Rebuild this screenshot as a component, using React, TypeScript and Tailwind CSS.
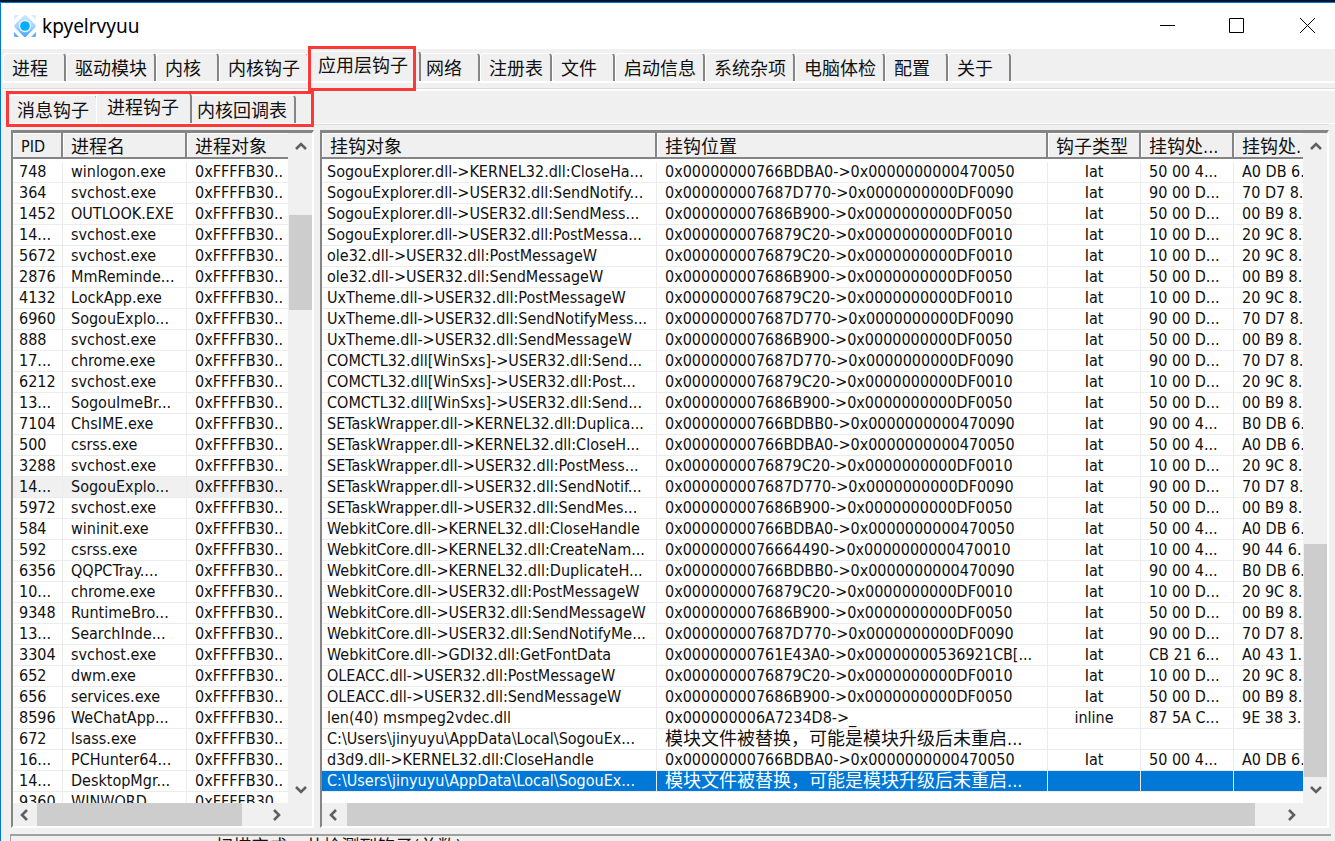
import type { ReactNode } from "react";
import clsx from "clsx";

const mainTabs = [
    "进程", "驱动模块", "内核", "内核钩子", "应用层钩子", "网络", "注册表",
    "文件", "启动信息", "系统杂项", "电脑体检", "配置", "关于",
];
const hookTabs = ["消息钩子", "进程钩子", "内核回调表"];

const processes: [string, string][] = [
    ["748", "winlogon.exe"],
    ["364", "svchost.exe"],
    ["1452", "OUTLOOK.EXE"],
    ["14...", "svchost.exe"],
    ["5672", "svchost.exe"],
    ["2876", "MmReminde..."],
    ["4132", "LockApp.exe"],
    ["6960", "SogouExplo..."],
    ["888", "svchost.exe"],
    ["17...", "chrome.exe"],
    ["6212", "svchost.exe"],
    ["13...", "SogouImeBr..."],
    ["7104", "ChsIME.exe"],
    ["500", "csrss.exe"],
    ["3288", "svchost.exe"],
    ["14...", "SogouExplo..."],
    ["5972", "svchost.exe"],
    ["584", "wininit.exe"],
    ["592", "csrss.exe"],
    ["6356", "QQPCTray...."],
    ["10...", "chrome.exe"],
    ["9348", "RuntimeBro..."],
    ["13...", "SearchInde..."],
    ["3304", "svchost.exe"],
    ["652", "dwm.exe"],
    ["656", "services.exe"],
    ["8596", "WeChatApp..."],
    ["672", "lsass.exe"],
    ["16...", "PCHunter64..."],
    ["14...", "DesktopMgr..."],
    ["9360", "WINWORD"],
];

const CLOSE = ["0x00000000766BDBA0->0x0000000000470050", "Iat", "50 00 4...", "A0 DB 6."];
const NOTIFY = ["0x000000007687D770->0x0000000000DF0090", "Iat", "90 00 D...", "70 D7 8."];
const SEND = ["0x000000007686B900->0x0000000000DF0050", "Iat", "50 00 D...", "00 B9 8."];
const POST = ["0x0000000076879C20->0x0000000000DF0010", "Iat", "10 00 D...", "20 9C 8."];
const DUP = ["0x00000000766BDBB0->0x0000000000470090", "Iat", "90 00 4...", "B0 DB 6."];
const REPLACED = ["模块文件被替换，可能是模块升级后未重启...", "", "", ""];

const hooks: string[][] = [
    ["SogouExplorer.dll->KERNEL32.dll:CloseHa...", ...CLOSE],
    ["SogouExplorer.dll->USER32.dll:SendNotify...", ...NOTIFY],
    ["SogouExplorer.dll->USER32.dll:SendMess...", ...SEND],
    ["SogouExplorer.dll->USER32.dll:PostMessa...", ...POST],
    ["ole32.dll->USER32.dll:PostMessageW", ...POST],
    ["ole32.dll->USER32.dll:SendMessageW", ...SEND],
    ["UxTheme.dll->USER32.dll:PostMessageW", ...POST],
    ["UxTheme.dll->USER32.dll:SendNotifyMess...", ...NOTIFY],
    ["UxTheme.dll->USER32.dll:SendMessageW", ...SEND],
    ["COMCTL32.dll[WinSxs]->USER32.dll:Send...", ...NOTIFY],
    ["COMCTL32.dll[WinSxs]->USER32.dll:Post...", ...POST],
    ["COMCTL32.dll[WinSxs]->USER32.dll:Send...", ...SEND],
    ["SETaskWrapper.dll->KERNEL32.dll:Duplica...", ...DUP],
    ["SETaskWrapper.dll->KERNEL32.dll:CloseH...", ...CLOSE],
    ["SETaskWrapper.dll->USER32.dll:PostMess...", ...POST],
    ["SETaskWrapper.dll->USER32.dll:SendNotif...", ...NOTIFY],
    ["SETaskWrapper.dll->USER32.dll:SendMes...", ...SEND],
    ["WebkitCore.dll->KERNEL32.dll:CloseHandle", ...CLOSE],
    ["WebkitCore.dll->KERNEL32.dll:CreateNam...", "0x0000000076664490->0x0000000000470010", "Iat", "10 00 4...", "90 44 6."],
    ["WebkitCore.dll->KERNEL32.dll:DuplicateH...", ...DUP],
    ["WebkitCore.dll->USER32.dll:PostMessageW", ...POST],
    ["WebkitCore.dll->USER32.dll:SendMessageW", ...SEND],
    ["WebkitCore.dll->USER32.dll:SendNotifyMe...", ...NOTIFY],
    ["WebkitCore.dll->GDI32.dll:GetFontData", "0x00000000761E43A0->0x00000000536921CB[...", "Iat", "CB 21 6...", "A0 43 1."],
    ["OLEACC.dll->USER32.dll:PostMessageW", ...POST],
    ["OLEACC.dll->USER32.dll:SendMessageW", ...SEND],
    ["len(40) msmpeg2vdec.dll", "0x000000006A7234D8->_", "inline", "87 5A C...", "9E 38 3."],
    ["C:\\Users\\jinyuyu\\AppData\\Local\\SogouEx...", ...REPLACED],
    ["d3d9.dll->KERNEL32.dll:CloseHandle", ...CLOSE],
    ["C:\\Users\\jinyuyu\\AppData\\Local\\SogouEx...", ...REPLACED],
];

function AppIcon() {
    return (
        <svg width="24" height="24" viewBox="0 0 24 24" aria-hidden="true">
            <defs>
                <linearGradient id="diamond" x1="0" y1="0" x2="1" y2="1">
                    <stop offset="0" stopColor="#cfe8ff" />
                    <stop offset="0.5" stopColor="#a9d4ff" />
                    <stop offset="1" stopColor="#3d9bff" />
                </linearGradient>
            </defs>
            <path d="M2 1h4L1 6V2zM22 1l1 1v4l-5-5z" fill="#d3eaff" />
            <path d="M1 22v-4l5 5H2zM22 23h-4l5-5v4z" fill="#5badff" />
            <rect x="3.8" y="3.8" width="16.4" height="16.4" rx="2" transform="rotate(45 12 12)" fill="url(#diamond)" />
            <circle cx="12" cy="12" r="6.2" fill="#e8f5ff" />
            <circle cx="12" cy="12" r="4.8" fill="#00aeff" />
        </svg>
    );
}

function Tabs({ items, active }: { items: string[]; active: string }) {
    return (
        <div role="tablist" className="flex h-8 items-end text-lg">
            {items.map((label) => (
                <button
                    key={label}
                    role="tab"
                    aria-selected={label === active}
                    className={clsx(
                        "shrink-0 rounded-t-sm border-t border-r-2 border-l border-t-white border-r-[#858585] border-l-white bg-[#f0f0f0] text-left leading-6 whitespace-nowrap",
                        label === active
                            ? "relative z-10 -mr-1 -ml-0.5 h-[30px] pr-[11px] pb-0.5 pl-2.5"
                            : "h-7 min-w-[63px] pt-0.5 pr-[7px] pl-2"
                    )}
                >
                    {label}
                </button>
            ))}
        </div>
    );
}

const arrows = {
    up: "M2 9l5-5 5 5",
    down: "M2 5l5 5 5-5",
    left: "M9 2L4 7l5 5",
    right: "M5 2l5 5-5 5",
};

function Arrow({ dir, label }: { dir: keyof typeof arrows; label: string }) {
    return (
        <button aria-label={label} className="flex size-6 shrink-0 items-center justify-center">
            <svg width="14" height="14" viewBox="0 0 14 14" fill="none" stroke="#606060" strokeWidth="2.6">
                <path d={arrows[dir]} />
            </svg>
        </button>
    );
}

function ListPanel({ className, vThumb, hThumb, children }: {
    className: string;
    vThumb: string;
    hThumb: string;
    children: ReactNode;
}) {
    return (
        <section className={clsx("flex min-h-0 flex-col border-t-[3px] border-l-2 border-r-2 border-b-2 border-t-[#858585] border-l-[#858585] border-r-white border-b-white", className)}>
            <div className="flex min-h-0 flex-1">
                <div className="min-w-0 flex-1 overflow-hidden bg-white">{children}</div>
                <div className="flex w-6 shrink-0 flex-col py-0.5 pl-px">
                    <Arrow dir="up" label="向上滚动" />
                    <div className="flex flex-1 flex-col">
                        <div className={clsx("bg-[#cdcdcd]", vThumb)} />
                    </div>
                    <Arrow dir="down" label="向下滚动" />
                </div>
            </div>
            <div className="flex h-[23px] shrink-0 pr-6">
                <Arrow dir="left" label="向左滚动" />
                <div className="flex flex-1">
                    <div className={clsx("bg-[#cdcdcd]", hThumb)} />
                </div>
                <Arrow dir="right" label="向右滚动" />
            </div>
        </section>
    );
}

function HeadCell({ children }: { children: ReactNode }) {
    return (
        <th
            scope="col"
            className="overflow-hidden border-r-2 border-b-2 border-[#858585] bg-[#f0f0f0] pt-1 pl-2 text-left text-lg leading-5 font-normal whitespace-nowrap shadow-[inset_1px_1px_0_#fff] last:border-r-0"
        >
            {children}
        </th>
    );
}

const cell = "overflow-hidden border-b border-r border-[#ececec] py-0 leading-5 whitespace-pre last:border-r-0";

export default function App() {
    return (
        <div className="flex h-screen flex-col overflow-hidden border-t-2 border-[#001830] bg-[#f0f0f0] font-['DejaVu_Sans_Condensed','Noto_Sans_CJK_SC',sans-serif] text-base text-[#111]">
            <div className="flex min-h-0 flex-1 flex-col border-t border-l border-[#0078d7]">
                <header className="flex h-[46px] shrink-0 items-center bg-white pl-3">
                    <AppIcon />
                    <h1 className="ml-[5px] font-['Noto_Sans',sans-serif] text-[19px] leading-6 text-black">kpyelrvyuu</h1>
                    <div className="ml-auto flex self-start text-black">
                        <button aria-label="最小化" className="flex h-11 w-[69px] items-center justify-center">
                            <svg width="15" height="15" stroke="currentColor"><path d="M0 7.5h15" /></svg>
                        </button>
                        <button aria-label="最大化" className="flex h-11 w-[69px] items-center justify-center">
                            <svg width="15" height="15" fill="none" stroke="currentColor"><path d="M.5.5h14v14H.5z" /></svg>
                        </button>
                        <button aria-label="关闭" className="flex h-11 w-16 items-center justify-center pl-2">
                            <svg width="15" height="15" stroke="currentColor"><path d="M0 0l15 15M15 0L0 15" /></svg>
                        </button>
                    </div>
                </header>

                <nav className="relative shrink-0 pl-0.5">
                    <Tabs items={mainTabs} active="应用层钩子" />
                    <div className="pointer-events-none absolute -top-[3px] left-[307px] z-20 h-[45px] w-[108px] border-3 border-[#fd3838]" />
                </nav>

                <main className="ml-0.5 flex min-h-0 flex-1 flex-col border-t-2 border-white pt-[5px]">
                    <div className="flex min-h-0 flex-1 flex-col border-t border-[#dcdcdc]">
                        <div className="relative shrink-0 border-t-2 border-white pl-[5px]">
                            <Tabs items={hookTabs} active="进程钩子" />
                            <div className="pointer-events-none absolute top-0 left-[3px] z-20 h-9 w-[308px] border-3 border-[#fd3838]" />
                        </div>

                        <div className="ml-1 flex min-h-0 flex-1 flex-col border-t border-white">
                            <div className="mr-1.5 flex min-h-0 flex-1 gap-1.5 border-t border-[#dcdcdc] pt-[5px] pl-1">
                                <ListPanel className="w-[303px] shrink-0" vThumb="mt-14 h-[95px]" hThumb="w-[205px]">
                                    <table className="w-full table-fixed border-separate border-spacing-0">
                                        <colgroup>
                                            <col className="w-[50px]" />
                                            <col className="w-[124px]" />
                                            <col />
                                        </colgroup>
                                        <thead>
                                            <tr>
                                                <HeadCell><span className="block text-base leading-5">PID</span></HeadCell>
                                                <HeadCell>进程名</HeadCell>
                                                <HeadCell>进程对象</HeadCell>
                                            </tr>
                                        </thead>
                                        <tbody>
                                            <tr aria-hidden="true"><td colSpan={3} className="h-[3px] p-0" /></tr>
                                            {processes.map(([pid, name], i) => (
                                                <tr key={i} className={clsx(i === 15 && "bg-[#f0f0f0]")}>
                                                    <td className={clsx(cell, "pl-1.5")}>{pid}</td>
                                                    <td className={clsx(cell, "pl-2")}>{name}</td>
                                                    <td className={clsx(cell, "pl-2")}>0xFFFFB30..</td>
                                                </tr>
                                            ))}
                                        </tbody>
                                    </table>
                                </ListPanel>

                                <ListPanel className="min-w-0 flex-1" vThumb="mt-auto h-[233px]" hThumb="ml-px mr-6 flex-1">
                                    <table className="w-full table-fixed border-separate border-spacing-0">
                                        <colgroup>
                                            <col className="w-[335px]" />
                                            <col />
                                            <col className="w-[93px]" />
                                            <col className="w-[93px]" />
                                            <col className="w-[69px]" />
                                        </colgroup>
                                        <thead>
                                            <tr>
                                                <HeadCell>挂钩对象</HeadCell>
                                                <HeadCell>挂钩位置</HeadCell>
                                                <HeadCell>钩子类型</HeadCell>
                                                <HeadCell>挂钩处...</HeadCell>
                                                <HeadCell>挂钩处.</HeadCell>
                                            </tr>
                                        </thead>
                                        <tbody>
                                            <tr aria-hidden="true"><td colSpan={5} className="h-[3px] p-0" /></tr>
                                            {hooks.map(([target, place, kind, now, orig], i) => (
                                                <tr key={i} className={clsx(i === hooks.length - 1 && "bg-[#0078d7] text-white")}>
                                                    <td className={clsx(cell, "pl-[5px]")}>{target}</td>
                                                    <td className={clsx(cell, "pl-2", place.startsWith("模") && "text-lg leading-5")}>{place}</td>
                                                    <td className={clsx(cell, "text-center")}>{kind}</td>
                                                    <td className={clsx(cell, "pl-2")}>{now}</td>
                                                    <td className={clsx(cell, "pl-2")}>{orig}</td>
                                                </tr>
                                            ))}
                                        </tbody>
                                    </table>
                                </ListPanel>
                            </div>
                            <footer className="mt-1.5 mr-1 ml-[3px] h-[7px] shrink-0 border-t-2 border-l border-[#a0a0a0] leading-[22px] whitespace-pre">
                                [14492]SogouExplorer.exe   <span className="text-lg leading-[22px]">扫描完成，共检测到钩子(总数)</span>:  30
                            </footer>
                        </div>
                    </div>
                </main>
            </div>
        </div>
    );
}
